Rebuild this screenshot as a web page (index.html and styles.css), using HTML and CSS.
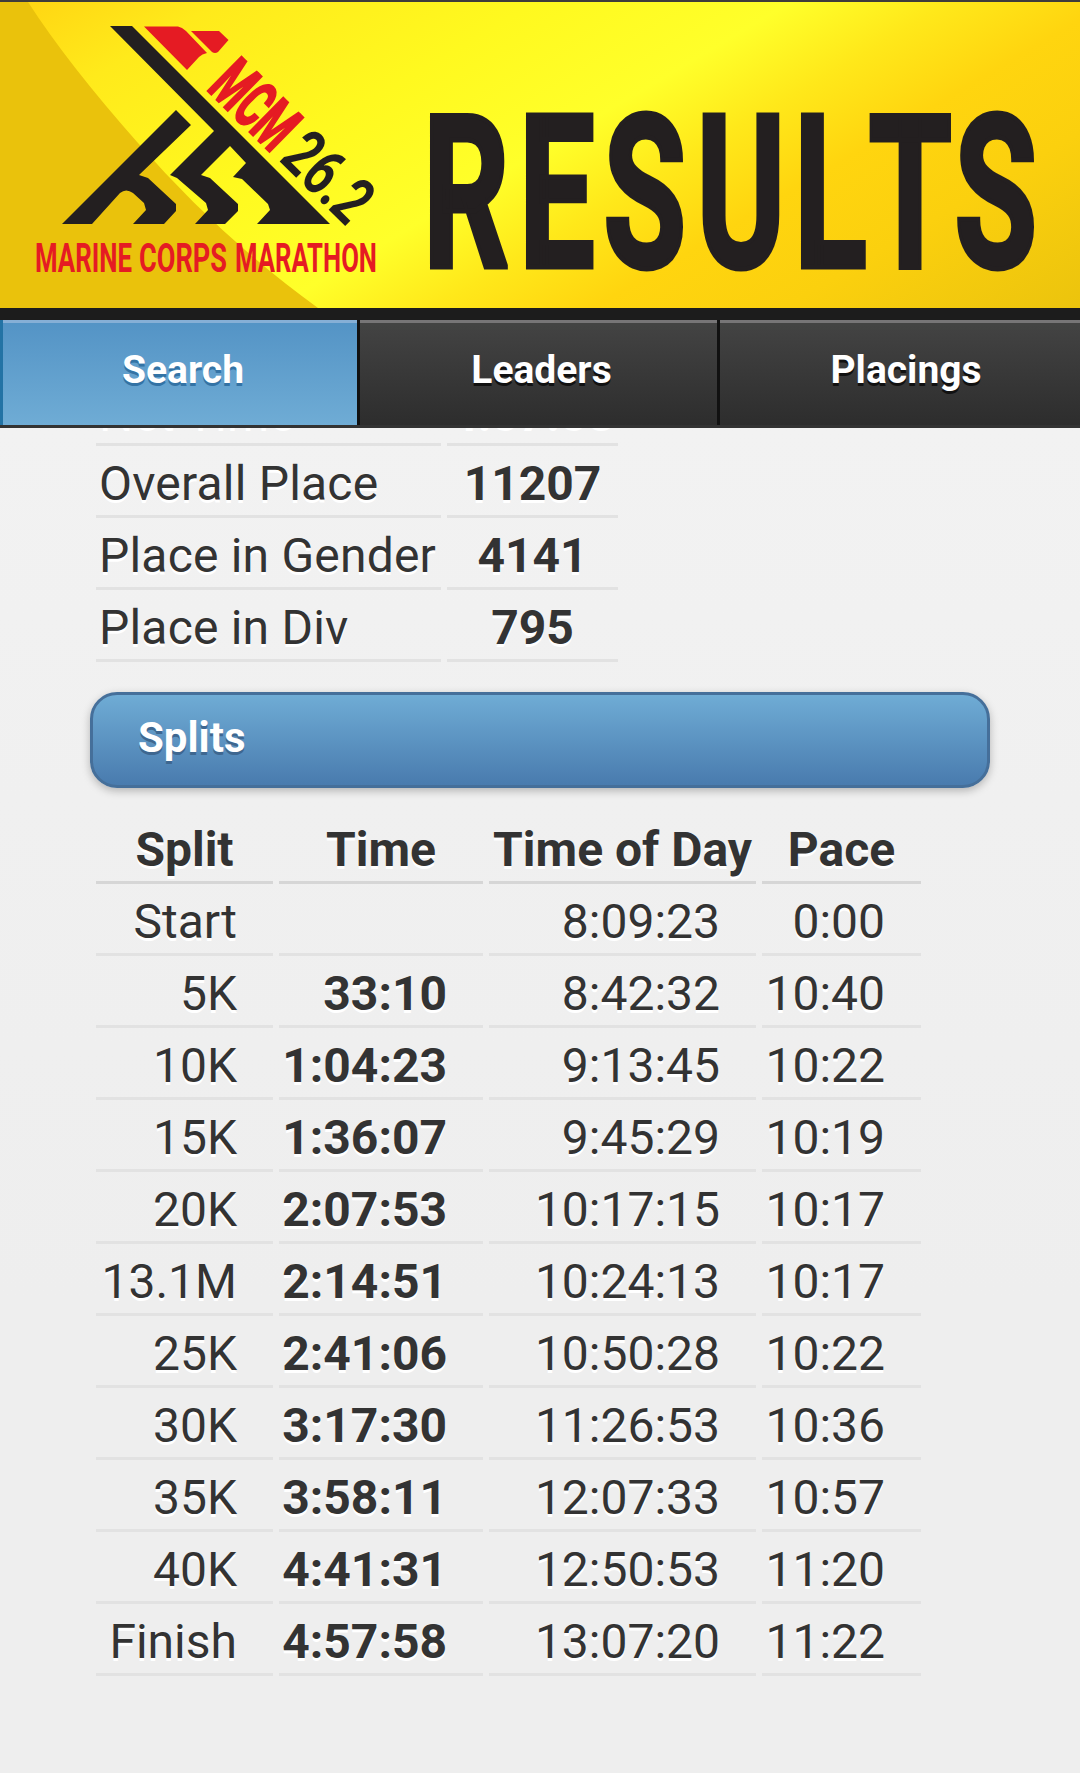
FILE: index.html
```html
<!DOCTYPE html>
<html lang="en">
<head>
    <meta charset="UTF-8">
    <meta name="viewport" content="width=device-width, initial-scale=1.0">
    <title>Marine Corps Marathon Results</title>
    <link rel="stylesheet" href="styles.css">
</head>
<body>
    <header class="header">
        <svg class="banner" viewBox="0 2 1080 306">
            <defs>
                <linearGradient id="glow" gradientUnits="userSpaceOnUse" x1="0" y1="0" x2="413" y2="697">
                    <stop offset="0.02" stop-color="#ffd613"/>
                    <stop offset="0.14" stop-color="#ffea1b"/>
                    <stop offset="0.34" stop-color="#fff91f"/>
                    <stop offset="0.5" stop-color="#ffff2a"/>
                    <stop offset="0.6" stop-color="#ffe81a"/>
                    <stop offset="0.7" stop-color="#ffd50f"/>
                    <stop offset="0.82" stop-color="#fbd00e"/>
                    <stop offset="1" stop-color="#ecc40d"/>
                </linearGradient>
            </defs>
            <rect x="0" y="2" width="1080" height="306" fill="url(#glow)"/>
            <path d="M0 2H28Q68 64 138 143Q222 239 318 308H0Z" fill="#eac20c"/>
            <!-- flag and marchers -->
            <path class="ink" d="M110 26H132L330 224H257L270 210L268 204L242 179L233 177L246 163L230 146L201 175L210 178L238 204V211L225 224H195L208 210L206 203L177 178L170 175L214 131Z"/>
            <path class="ink" d="M176 110L191 125L139 175L148 178L176 204V211L164 224H133L146 210L144 203L133 193Q126 188 120 193L92 224H62Z"/>
            <path class="red" d="M144 26.500H178Q182 27 186 31L207 53Q202 54 199 57L187 70Z"/>
            <path class="red" d="M191 31H219L228.500 40L218 52Q215 54 212 52Z"/>
            <g transform="translate(206 89) rotate(44.500)" font-size="67">
                <text class="red heavy" x="0" y="0" textLength="92" lengthAdjust="spacingAndGlyphs">MCM</text>
                <text class="ink" x="101" y="0" textLength="96" lengthAdjust="spacingAndGlyphs">26.2</text>
            </g>
            <g class="red" font-size="41">
                <text x="35" y="271.500" textLength="97" lengthAdjust="spacingAndGlyphs">MARINE</text>
                <text x="139" y="271.500" textLength="88" lengthAdjust="spacingAndGlyphs">CORPS</text>
                <text x="235" y="271.500" textLength="142" lengthAdjust="spacingAndGlyphs">MARATHON</text>
            </g>
            <g transform="scale(0.630 1)">
                <text class="ink title" x="671.500 823.700 957.500 1105.600 1260.200 1378.700 1514.700" y="267">RESULTS</text>
            </g>
        </svg>
        <nav class="tabs">
            <a class="tab active">Search</a>
            <a class="tab">Leaders</a>
            <a class="tab">Placings</a>
        </nav>
    </header>
    <main class="content">
        <table class="summary">
            <tr><td>Net Time</td><td>4:57:58</td></tr>
            <tr><td>Overall Place</td><td>11207</td></tr>
            <tr><td>Place in Gender</td><td>4141</td></tr>
            <tr><td>Place in Div</td><td>795</td></tr>
        </table>
        <div class="divider">Splits</div>
        <table class="splits">
            <tr><th>Split</th><th>Time</th><th>Time of Day</th><th>Pace</th></tr>
            <tr><td>Start</td><td></td><td>8:09:23</td><td>0:00</td></tr>
            <tr><td>5K</td><td>33:10</td><td>8:42:32</td><td>10:40</td></tr>
            <tr><td>10K</td><td>1:04:23</td><td>9:13:45</td><td>10:22</td></tr>
            <tr><td>15K</td><td>1:36:07</td><td>9:45:29</td><td>10:19</td></tr>
            <tr><td>20K</td><td>2:07:53</td><td>10:17:15</td><td>10:17</td></tr>
            <tr><td>13.1M</td><td>2:14:51</td><td>10:24:13</td><td>10:17</td></tr>
            <tr><td>25K</td><td>2:41:06</td><td>10:50:28</td><td>10:22</td></tr>
            <tr><td>30K</td><td>3:17:30</td><td>11:26:53</td><td>10:36</td></tr>
            <tr><td>35K</td><td>3:58:11</td><td>12:07:33</td><td>10:57</td></tr>
            <tr><td>40K</td><td>4:41:31</td><td>12:50:53</td><td>11:20</td></tr>
            <tr><td>Finish</td><td>4:57:58</td><td>13:07:20</td><td>11:22</td></tr>
        </table>
    </main>
</body>
</html>
```
FILE: styles.css
```css
* {
    box-sizing: border-box;
}

body {
    margin: 0;
    height: 1773px;
    overflow: hidden;
    background: linear-gradient(#f2f2f2 428px, #f0f0f0 800px, #eeeeee 1300px);
    font-family: Roboto, sans-serif;
    font-size: 48px;
    line-height: 57px;
    color: #333;
    text-shadow: 0 3px 0 #fff;
}

.header {
    position: relative;
    z-index: 2;
    height: 428px;
    background: #1c1c1c;
    border-top: 2px solid #3f3c3b;
    text-shadow: none;
}

.banner {
    display: block;
    width: 1080px;
    height: 306px;
    margin-bottom: 12px;
    font-family: Roboto, sans-serif;
    font-weight: 700;
}

.ink {
    fill: #231f20;
}

.red {
    fill: #e51b23;
}

.heavy {
    stroke: #e51b23;
    stroke-width: 2.5;
}

.title {
    font-size: 214px;
    stroke: #231f20;
    stroke-width: 5;
}

.tabs {
    display: grid;
    grid-template-columns: 360px 360px 360px;
    height: 108px;
    border-bottom: 3px solid #333;
}

.tab {
    padding: 27px 0 0 6px;
    border-right: 3px solid #111;
    background: linear-gradient(#444, #2d2d2d);
    box-shadow: inset 0 3px #777577;
    font-size: 39px;
    font-weight: 700;
    line-height: 46px;
    text-align: center;
    color: #fff;
    text-shadow: 0 3px 0 #111;
}

.tab:last-child {
    padding-left: 12px;
    border-right: 0;
}

.tab.active {
    border-left: 3px solid #2373a5;
    background: linear-gradient(#5393c5, #6facd5);
    box-shadow: inset 0 3px #86afd6;
    text-shadow: 0 3px 0 #3373a5;
}

/* scrolled up under the header */
.content {
    margin-top: -54px;
    padding: 0 90px;
}

table {
    border-collapse: separate;
    border-spacing: 6px;
}

td, th {
    height: 66px;
    padding: 3px;
    border-bottom: 3px solid #e2e2e2;
    white-space: nowrap;
}

th {
    border-color: #d6d6d6;
}

.summary {
    table-layout: fixed;
    width: 534px;
}

.summary td:first-child {
    width: 345px;
    letter-spacing: 0.2px;
}

.summary td:last-child {
    font-weight: 700;
    text-align: center;
}

.divider {
    height: 96px;
    margin: 24px 0;
    padding: 14px 45px;
    border: 3px solid #456f9a;
    border-radius: 27px;
    background: linear-gradient(#6facd5, #497bae);
    box-shadow: 0 3px 9px rgba(0, 0, 0, 0.25);
    font-size: 42px;
    font-weight: 700;
    color: #fff;
    text-shadow: 0 3px 0 #3e6790;
}

.splits {
    table-layout: fixed;
    width: 837px;
}

.splits td {
    padding-right: 36px;
    text-align: right;
}

.splits td:nth-child(2) {
    font-weight: 700;
}

.splits th:nth-child(1) {
    width: 177px;
}

.splits th:nth-child(2) {
    width: 204px;
}

.splits th:nth-child(3) {
    width: 267px;
}

.splits th:nth-child(4) {
    width: 159px;
}
```
